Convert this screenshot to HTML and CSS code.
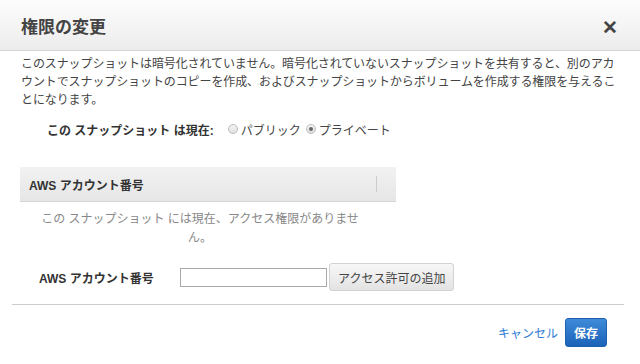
FILE: index.html
```html
<!DOCTYPE html>
<html lang="ja">
<head>
  <meta charset="UTF-8" />
  <title>権限の変更</title>
  <link rel="stylesheet" href="styles.css">
</head>
<body>

<div class="modal">
  <header class="modal-header">
    <h1>権限の変更</h1>
    <span class="cerrar">&#x2715;</span>
  </header>

  <div class="modal-body">
    <p class="aviso">このスナップショットは暗号化されていません。暗号化されていないスナップショットを共有すると、別のアカウントでスナップショットのコピーを作成、およびスナップショットからボリュームを作成する権限を与えることになります。</p>

    <div class="estado">
      <span class="estado-label">この スナップショット は現在:</span>
      <label class="radio"><span class="punto"></span>パブリック</label>
      <label class="radio"><span class="punto activo"></span>プライベート</label>
    </div>

    <div class="tabla">
      <div class="tabla-head">
        <span>AWS アカウント番号</span>
        <span class="sep"></span>
      </div>
      <div class="tabla-vacia">この スナップショット には現在、アクセス権限がありませ<br>ん。</div>
    </div>

    <div class="fila-form">
      <label for="cuenta">AWS アカウント番号</label>
      <input type="text" id="cuenta" />
      <button class="btn-gris">アクセス許可の追加</button>
    </div>
  </div>

  <footer class="modal-footer">
    <a class="cancelar" href="#">キャンセル</a>
    <button class="btn-azul">保存</button>
  </footer>
</div>

</body>
</html>
```

FILE: styles.css
```css
* {
  box-sizing: border-box;
}

body {
  margin: 0;
  background: #fff;
  font-family: "Liberation Sans", "Noto Sans CJK JP", sans-serif;
  color: #444;
}

.modal {
  width: 640px;
  height: 364px;
  background: #fff;
}

/* Cabecera */
.modal-header {
  height: 51px;
  display: flex;
  align-items: center;
  justify-content: space-between;
  padding: 0 22px 0 21px;
  background: linear-gradient(#fdfdfd, #ececec);
  border-bottom: 1px solid #d4d4d4;
}

.modal-header h1 {
  margin: 0;
  font-size: 17px;
  font-weight: bold;
  color: #444;
}

.cerrar {
  font-size: 19px;
  font-weight: bold;
  color: #444;
  margin-top: 4px;
}

/* Cuerpo */
.modal-body {
  padding: 0 12px;
}

.aviso {
  margin: 4px 0 0;
  padding: 0 9px;
  font-size: 12px;
  letter-spacing: -0.1px;
  line-height: 18px;
  color: #444;
}

.estado {
  display: flex;
  align-items: center;
  margin-top: 10px;
  padding-left: 35px;
  font-size: 12px;
  height: 20px;
}

.estado-label {
  font-weight: bold;
  color: #333;
  margin-right: 14px;
}

.radio {
  display: flex;
  align-items: center;
  color: #444;
  margin-right: 5px;
}

.punto {
  width: 10px;
  height: 10px;
  border-radius: 50%;
  border: 1px solid #bbb;
  background: linear-gradient(#f4f4f4, #e0e0e0);
  margin-right: 3px;
  position: relative;
}

.punto.activo::after {
  content: "";
  position: absolute;
  left: 2px;
  top: 2px;
  width: 4px;
  height: 4px;
  border-radius: 50%;
  background: #666;
}

/* Tabla de cuentas */
.tabla {
  width: 376px;
  margin: 28px 0 0 8px;
}

.tabla-head {
  height: 35px;
  display: flex;
  align-items: center;
  justify-content: space-between;
  padding: 0 19px 0 9px;
  background: linear-gradient(#f2f2f2, #e6e6e6);
  border-bottom: 1px solid #d6d6d6;
  font-size: 12px;
  font-weight: bold;
  color: #333;
}

.sep {
  width: 1px;
  height: 16px;
  background: #ccc;
}

.tabla-vacia {
  text-align: center;
  font-size: 12px;
  line-height: 19px;
  color: #888;
  padding: 8px 16px 0 0;
}

/* Formulario */
.fila-form {
  display: flex;
  align-items: center;
  margin-top: 15px;
  padding-left: 27px;
  height: 28px;
}

.fila-form label {
  width: 141px;
  font-size: 12px;
  font-weight: bold;
  color: #333;
}

.fila-form input {
  width: 147px;
  height: 19px;
  border: 1px solid #aaa;
  padding: 2px 4px;
  margin-right: 2px;
}

.btn-gris {
  height: 28px;
  padding: 0 8px;
  font-family: inherit;
  font-size: 12px;
  color: #444;
  background: linear-gradient(#f7f7f7, #e3e3e3);
  border: 1px solid #d2d2d2;
  border-radius: 3px;
}

/* Pie */
.modal-footer {
  margin: 13px 16px 0 12px;
  border-top: 1px solid #ccc;
  display: flex;
  align-items: center;
  justify-content: flex-end;
  gap: 7px;
  padding-top: 13px;
  padding-right: 17px;
}

.cancelar {
  color: #2d7bd4;
  text-decoration: none;
  font-size: 12px;
}

.btn-azul {
  height: 29px;
  width: 42px;
  font-family: inherit;
  font-size: 12px;
  font-weight: bold;
  color: #fff;
  background: linear-gradient(#3f8ad9, #1b63b8);
  border: 1px solid #1f60ad;
  border-radius: 3px;
}
```
